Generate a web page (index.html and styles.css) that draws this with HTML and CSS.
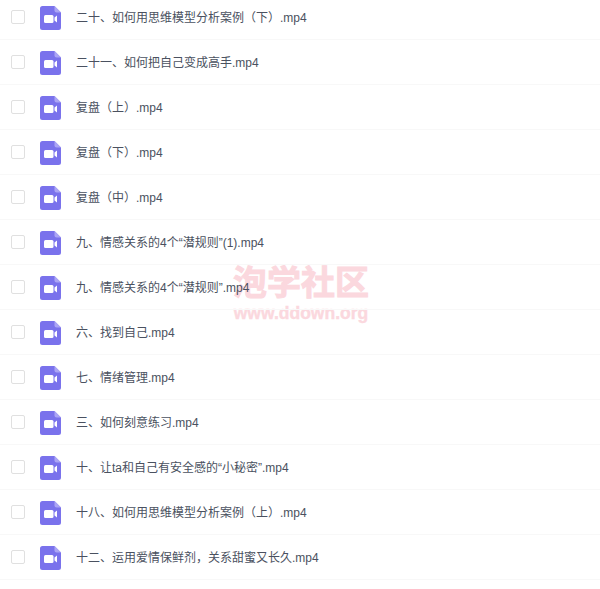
FILE: index.html
```html
<!DOCTYPE html>
<html lang="zh-CN">
<head>
    <meta charset="UTF-8">
    <meta name="viewport" content="width=device-width, initial-scale=1.0">
    <title>文件列表</title>
    <link rel="stylesheet" href="styles.css">
</head>

<body>
    <svg class="icon-defs" width="0" height="0">
        <symbol id="video-file" viewBox="0 0 21 24">
            <path fill="#7a72ec" d="M2.500 0H14.500L21 6.500V21.500A2.500 2.500 0 0 1 18.500 24H2.500A2.500 2.500 0 0 1 0 21.500V2.500A2.500 2.500 0 0 1 2.500 0Z"/>
            <path fill="#aba5f5" d="M14.500 0L21 6.500H16.500A2 2 0 0 1 14.500 4.500Z"/>
            <rect fill="#fff" x="4" y="9" width="9.500" height="8" rx="1.500"/>
            <path fill="#fff" d="M14.500 11.500L17 9.500V16.500L14.500 14.500Z"/>
        </symbol>
    </svg>

    <ul class="file-list">
        <li class="file-row"><span class="check"></span><svg class="file-icon"><use href="#video-file"/></svg><span class="file-name">二十、如何用思维模型分析案例（下）.mp4</span></li>
        <li class="file-row"><span class="check"></span><svg class="file-icon"><use href="#video-file"/></svg><span class="file-name">二十一、如何把自己变成高手.mp4</span></li>
        <li class="file-row"><span class="check"></span><svg class="file-icon"><use href="#video-file"/></svg><span class="file-name">复盘（上）.mp4</span></li>
        <li class="file-row"><span class="check"></span><svg class="file-icon"><use href="#video-file"/></svg><span class="file-name">复盘（下）.mp4</span></li>
        <li class="file-row"><span class="check"></span><svg class="file-icon"><use href="#video-file"/></svg><span class="file-name">复盘（中）.mp4</span></li>
        <li class="file-row"><span class="check"></span><svg class="file-icon"><use href="#video-file"/></svg><span class="file-name">九、情感关系的4个“潜规则”(1).mp4</span></li>
        <li class="file-row"><span class="check"></span><svg class="file-icon"><use href="#video-file"/></svg><span class="file-name">九、情感关系的4个“潜规则”.mp4</span></li>
        <li class="file-row"><span class="check"></span><svg class="file-icon"><use href="#video-file"/></svg><span class="file-name">六、找到自己.mp4</span></li>
        <li class="file-row"><span class="check"></span><svg class="file-icon"><use href="#video-file"/></svg><span class="file-name">七、情绪管理.mp4</span></li>
        <li class="file-row"><span class="check"></span><svg class="file-icon"><use href="#video-file"/></svg><span class="file-name">三、如何刻意练习.mp4</span></li>
        <li class="file-row"><span class="check"></span><svg class="file-icon"><use href="#video-file"/></svg><span class="file-name">十、让ta和自己有安全感的“小秘密”.mp4</span></li>
        <li class="file-row"><span class="check"></span><svg class="file-icon"><use href="#video-file"/></svg><span class="file-name">十八、如何用思维模型分析案例（上）.mp4</span></li>
        <li class="file-row"><span class="check"></span><svg class="file-icon"><use href="#video-file"/></svg><span class="file-name">十二、运用爱情保鲜剂，关系甜蜜又长久.mp4</span></li>
    </ul>

    <div class="watermark">
        <div class="watermark-title">泡学社区</div>
        <div class="watermark-url">www.ddown.org</div>
    </div>
</body>
</html>
```

FILE: styles.css
```css
html, body {
    height: 100%;
}
body {
    margin: 0;
    overflow: hidden;
    background-color: #fff;
    font-family: "Liberation Sans", "Noto Sans CJK SC", sans-serif;
}
.icon-defs {
    display: block;
    height: 0;
}
.file-list {
    position: relative;
    z-index: 1;
    list-style: none;
    margin: -5px 0 0;
    padding: 0;
}
.file-row {
    display: flex;
    align-items: center;
    box-sizing: border-box;
    height: 45px;
    padding-left: 11px;
    border-bottom: 1px solid #f8f8f8;
}
.check {
    box-sizing: border-box;
    width: 14px;
    height: 14px;
    margin-right: 15px;
    border: 1px solid #e0e0e0;
    border-radius: 2px;
}
.file-icon {
    width: 21px;
    height: 24px;
    margin-top: 1px;
    margin-right: 15px;
}
.file-name {
    margin-top: -1px;
    font-size: 12px;
    color: #4a5160;
}
.watermark {
    position: absolute;
    left: 233px;
    top: 264px;
    width: 136px;
    text-align: center;
    color: #fbd8de;
    font-weight: bold;
}
.watermark-title {
    font-size: 34px;
    line-height: 38px;
    -webkit-text-stroke: 1px #fbd8de;
}
.watermark-url {
    margin-top: 1px;
    font-size: 17.500px;
    line-height: 20px;
    white-space: nowrap;
    -webkit-text-stroke: 0.4px #fbd8de;
}
```
